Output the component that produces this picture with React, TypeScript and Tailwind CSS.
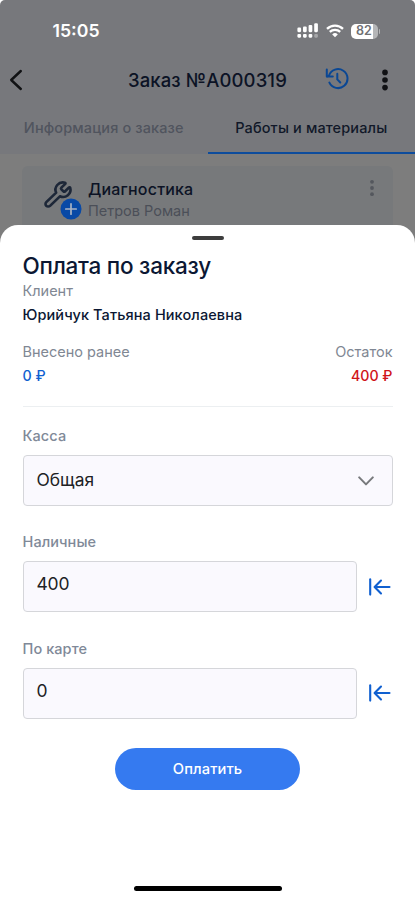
import type { ReactNode } from "react";

function HistoryIcon() {
  return (
    <svg className="h-6 w-6" viewBox="0 0 24 24" fill="none" stroke="#0a4794" strokeWidth="2" strokeLinecap="round" strokeLinejoin="round">
      <path d="M2.2 8.4 4 7.6A9.5 9.5 0 1 1 4.4 14.6" />
      <path d="M1.8 1.6v7h6" />
      <path d="M12.3 5.8v5.6l3 3.1" />
    </svg>
  );
}

function StatusBar() {
  return (
    <div className="flex h-[62px] items-center justify-between pr-[35px] pl-[52.5px]">
      <span className="text-[17.7px] leading-6 font-semibold text-white">15:05</span>
      <div className="flex items-center">
        <svg width="22" height="16" viewBox="0 0 22 16" fill="white">
          <rect x="0.4" y="4.6" width="3.7" height="4.6" rx="1.1" />
          <rect x="6" y="3.4" width="3.7" height="5.8" rx="1.1" />
          <rect x="11.6" y="2" width="3.7" height="7.2" rx="1.1" />
          <rect x="17.2" y="0.3" width="3.7" height="8.9" rx="1.1" />
          <rect x="0.4" y="10.9" width="3.7" height="3.8" rx="1.1" />
          <rect x="6" y="10.9" width="3.7" height="3.8" rx="1.1" />
          <rect x="11.6" y="10.9" width="3.7" height="3.8" rx="1.1" />
          <rect x="17.2" y="10.9" width="3.7" height="3.8" rx="1.1" opacity="0.35" />
        </svg>
        <svg className="ml-[7px]" width="18" height="14" viewBox="0 0 18 14" fill="none" stroke="white">
          <path d="M1 4.8a11.5 11.5 0 0 1 16 0" strokeWidth="2.3" />
          <path d="M3.8 7.9a7.6 7.6 0 0 1 10.4 0" strokeWidth="2.3" />
          <path d="M9 13.2 6.2 10.4a4 4 0 0 1 5.6 0z" fill="white" stroke="none" />
        </svg>
        <div className="ml-[7px] flex items-center gap-px">
          <div className="flex h-[15px] w-[27px] items-center justify-center rounded-[5px] bg-linear-to-r from-white from-82% to-[#b5b6b8] to-82% text-[12.5px] leading-none font-semibold text-[#6f7074]">
            82
          </div>
          <div className="h-[5px] w-[1.5px] rounded-r-full bg-[#b5b6b8]" />
        </div>
      </div>
    </div>
  );
}

function TransferIcon() {
  return (
    <svg className="mr-[2px] shrink-0" width="22" height="18" viewBox="0 0 22 18" fill="none" stroke="#1060d0" strokeWidth="2.1" strokeLinecap="round" strokeLinejoin="round">
      <path d="M1.2 1.4v15.2" />
      <path d="M20.5 9H5.8M12 2.6 5.6 9l6.4 6.4" />
    </svg>
  );
}

function Field({ label, children }: { label: string; children: ReactNode }) {
  return (
    <div className="mb-[26.5px]">
      <p className="mb-[9px] text-[14.5px] leading-5 font-medium tracking-[0.08px] text-[#808998]">{label}</p>
      <div className="flex items-center justify-between">{children}</div>
    </div>
  );
}

export default function App() {
  return (
    <div className="flex h-[900px] w-full flex-col overflow-hidden bg-white font-['Inter',sans-serif]">
      <header className="h-[154px] shrink-0 rounded-t-[5px] bg-[#77787c]">
        <StatusBar />
        <div className="flex h-9 items-center">
          <svg className="ml-[9px]" width="14" height="22" viewBox="0 0 14 22" fill="none" stroke="#111214" strokeWidth="2.4" strokeLinecap="round" strokeLinejoin="round">
            <path d="M11.8 2 2.2 11l9.6 9" />
          </svg>
          <h1 className="ml-[105px] w-[160px] text-[18.5px] leading-6 font-medium tracking-[0.12px] whitespace-nowrap text-[#0c1325]">Заказ №A000319</h1>
          <div className="ml-[37px]">
            <HistoryIcon />
          </div>
          <svg className="ml-[32px]" width="8" height="22" viewBox="0 0 8 22" fill="#101114">
            <circle cx="4" cy="3.4" r="2.8" />
            <circle cx="4" cy="11" r="2.8" />
            <circle cx="4" cy="18.6" r="2.8" />
          </svg>
        </div>
        <nav className="grid h-14 grid-cols-2 text-center text-[14.5px] leading-5 font-medium whitespace-nowrap">
          <span className="pt-5 tracking-[0.13px] text-[#50545e]">Информация о заказе</span>
          <span className="border-b-2 border-[#0d4c9c] pt-5 tracking-[0.13px] text-[#111829]">Работы и материалы</span>
        </nav>
      </header>

      <div className="h-[71px] shrink-0 bg-[#7d7d7d] px-[22px] pt-3">
        <div className="flex h-20 rounded-md bg-[#77797b] pl-[21px]">
          <div className="relative w-[45px] pt-[14px]">
            <svg width="30" height="29" viewBox="0 0 24 24" preserveAspectRatio="none" fill="none" stroke="#1d2738" strokeWidth="2.1" strokeLinecap="round" strokeLinejoin="round">
              <path d="M14.7 6.3a1 1 0 0 0 0 1.4l1.6 1.6a1 1 0 0 0 1.4 0l3.106-3.105c.32-.322.863-.22.983.218a6 6 0 0 1-8.259 7.057l-7.91 7.91a1 1 0 0 1-2.999-3l7.91-7.91a6 6 0 0 1 7.057-8.259c.438.12.54.662.219.984z" />
            </svg>
            <svg className="absolute top-8 left-[17px]" width="22" height="22" viewBox="0 0 22 22">
              <circle cx="11" cy="11" r="10.5" fill="#0849a6" />
              <path d="M11 5.8v10.4M5.8 11h10.4" stroke="#a9b3c3" strokeWidth="1.7" strokeLinecap="round" />
            </svg>
          </div>
          <div className="flex-1 pt-[11px]">
            <p className="text-[16px] leading-6 font-medium tracking-[0.18px] text-[#0c1325]">Диагностика</p>
            <p className="text-[14.5px] leading-5 text-[#4b4f58]">Петров Роман</p>
          </div>
          <svg className="mt-[13px] mr-[18.5px]" width="6" height="18" viewBox="0 0 6 18" fill="#54575d">
            <circle cx="3" cy="2.8" r="1.9" />
            <circle cx="3" cy="9" r="1.9" />
            <circle cx="3" cy="15.2" r="1.9" />
          </svg>
        </div>
      </div>

      {/* the backdrop stays visible behind the sheet's rounded corners */}
      <div className="flex flex-1 flex-col bg-linear-to-b from-[#7d7d7d] from-[20px] to-white to-[20px]">
        <main className="flex flex-1 flex-col rounded-t-[18px] bg-white px-[22.5px]">
          <div className="mx-auto mt-[11px] h-[4px] w-8 shrink-0 rounded-full bg-[#3d3d3d]" />
          <h2 className="mt-[11px] text-[22.5px] leading-[30px] font-medium tracking-[-0.25px] text-[#0b1733]">Оплата по заказу</h2>
          <p className="text-[14.5px] leading-5 text-[#808793]">Клиент</p>
          <p className="mt-[4px] text-[14.5px] leading-5 font-medium tracking-[0.1px] text-[#0b1733]">Юрийчук Татьяна Николаевна</p>

          <div className="mt-[15px] flex justify-between border-b border-[#eceff1] pb-[18px] text-[14.5px] leading-6">
            <div>
              <p className="text-[#808793]">Внесено ранее</p>
              <p className="text-[14.2px] font-medium text-[#1060d0]">0 ₽</p>
            </div>
            <div className="text-right">
              <p className="text-[#808793]">Остаток</p>
              <p className="text-[14.2px] font-medium text-[#d01418]">400 ₽</p>
            </div>
          </div>

          <div className="mt-[18.5px]">
            <Field label="Касса">
              <div className="flex h-[51px] w-full items-center justify-between rounded-[4px] border border-[#d5d6da] bg-[#faf9fe] pt-px pr-[18px] pl-[13px] text-[17.4px] text-[#202124]">
                <span>Общая</span>
                <svg width="16" height="10" viewBox="0 0 16 10" fill="none" stroke="#77797c" strokeWidth="2" strokeLinecap="round" strokeLinejoin="round">
                  <path d="m1.2 1.4 6.8 7 6.8-7" />
                </svg>
              </div>
            </Field>
            <Field label="Наличные">
              <div className="flex h-[51px] w-[334px] items-center rounded-[4px] border border-[#d5d6da] bg-[#faf9fe] pb-[4px] pl-[13px] text-[17.5px] tracking-[-0.2px] text-[#202124]">400</div>
              <TransferIcon />
            </Field>
            <Field label="По карте">
              <div className="flex h-[51px] w-[334px] items-center rounded-[4px] border border-[#d5d6da] bg-[#faf9fe] pb-[4px] pl-[13px] text-[17.5px] text-[#202124]">0</div>
              <TransferIcon />
            </Field>
          </div>

          <button className="mx-auto mt-[3px] h-[42px] w-[185px] shrink-0 rounded-full bg-[#357af0] text-[14.7px] font-medium tracking-[0.1px] text-white">Оплатить</button>
          <div className="mx-auto mt-auto mb-[9px] h-[5px] w-[148px] shrink-0 rounded-full bg-black" />
        </main>
      </div>
    </div>
  );
}
